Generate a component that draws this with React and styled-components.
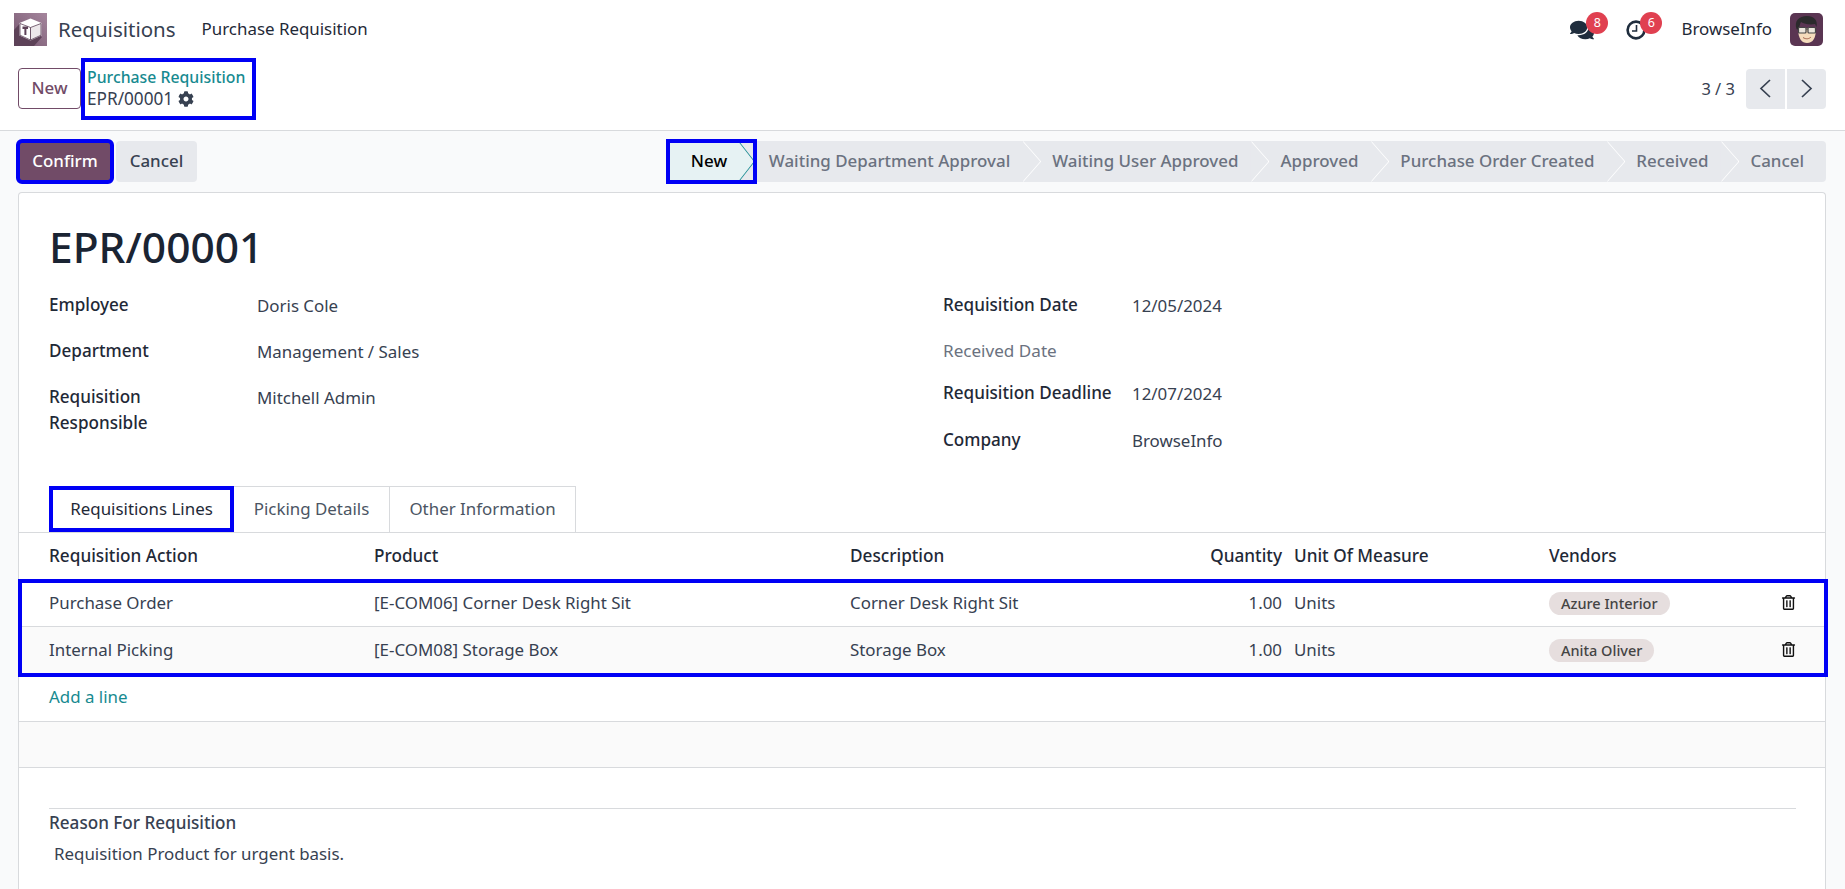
import React from 'react';
import styled, { createGlobalStyle } from 'styled-components';
import { FaComments, FaCog, FaRegTrashAlt } from 'react-icons/fa';

const GlobalStyle = createGlobalStyle`
  html, body, #root {
    height: 100%;
    margin: 0;
  }
  body {
    background: #f9fafb;
    color: #374151;
    font-family: "Noto Sans", "Open Sans", sans-serif;
    font-size: 16.9px;
    overflow: hidden;
  }
  * { box-sizing: border-box; }
`;

const MARK = '#0000f5';
const LINE = '#d8dadd';
const COLUMNS = '325px 476px 444px 255px 232px 1fr';

const Page = styled.div`
  height: 100vh;
  display: flex;
  flex-direction: column;
`;

const Top = styled.header`
  background: #fff;
  border-bottom: 1px solid ${LINE};
  height: 131px;
`;

const Navbar = styled.nav`
  height: 59px;
  display: flex;
  align-items: center;
  padding: 0 22px 0 14px;
`;

const Brand = styled.span`
  margin-left: 11px;
  padding-bottom: 2px;
  font-size: 20.5px;
  color: #374151;
`;

const MenuLink = styled.span`
  margin-left: 26px;
  padding-bottom: 2px;
  color: #1f2937;
`;

const NavRight = styled.div`
  margin-left: auto;
  display: flex;
  align-items: center;
`;

const NavIcon = styled.div`
  position: relative;
  width: ${(p) => p.$w}px;
  height: 20px;
  margin-right: ${(p) => p.$gap}px;
  display: flex;
  align-items: center;
  color: #1f2d3d;
`;

const Badge = styled.span`
  position: absolute;
  top: -8px;
  right: ${(p) => p.$right}px;
  width: 22px;
  height: 22px;
  border-radius: 50%;
  background: #e04050;
  color: #fff;
  font-size: 12.5px;
  display: flex;
  align-items: center;
  justify-content: center;
`;

const UserName = styled.span`
  padding-bottom: 2px;
  color: #1f2937;
  margin-right: 18px;
`;

const ControlRow = styled.div`
  height: 59px;
  display: flex;
  align-items: center;
  padding: 0 19px 0 18px;
`;

const NewButton = styled.button`
  width: 63px;
  height: 41px;
  padding: 0 0 2px;
  background: #fff;
  border: 1px solid #714b67;
  border-radius: 4px;
  color: #714b67;
  font: 500 16.9px "Noto Sans", sans-serif;
`;

const Breadcrumb = styled.div`
  width: 175px;
  height: 62px;
  padding: 0 0 1px 6px;
  display: flex;
  flex-direction: column;
  justify-content: center;
  outline: 4px solid ${MARK};
  outline-offset: -4px;
  line-height: 21px;
`;

const ParentLink = styled.span`
  color: #178a90;
  font-weight: 500;
  font-size: 15.8px;
  white-space: nowrap;
`;

const RecordName = styled.span`
  display: flex;
  align-items: center;
  gap: 5px;
  font-size: 17.2px;
`;

const Pager = styled.div`
  margin-left: auto;
  display: flex;
  align-items: center;
`;

const PagerText = styled.span`
  margin-right: 11px;
  font-size: 16.5px;
`;

const PagerButton = styled.button`
  width: 39px;
  height: 40px;
  margin-left: ${(p) => (p.$next ? 2 : 0)}px;
  padding: 0;
  border: 0;
  background: #e7e9ed;
  color: #374151;
  border-radius: ${(p) => (p.$next ? '0 4px 4px 0' : '4px 0 0 4px')};
  display: flex;
  align-items: center;
  justify-content: center;
`;

const ActionBar = styled.div`
  height: 61px;
  flex: none;
  display: flex;
  align-items: flex-start;
  padding: 10px 19px 0 18px;
`;

const ActionButton = styled.button`
  height: 41px;
  width: ${(p) => p.$w}px;
  margin-right: 4px;
  padding: 0 0 3px;
  border: 0;
  border-radius: 4px;
  font: 500 16.9px "Noto Sans", sans-serif;
  background: ${(p) => (p.$primary ? '#714b67' : '#e7e9ed')};
  color: ${(p) => (p.$primary ? '#fff' : '#374151')};
  ${(p) => p.$primary && `outline: 4px solid ${MARK}; outline-offset: -2px;`}
`;

const StatusBar = styled.div`
  margin-left: auto;
  display: flex;
  height: 41px;
`;

const Step = styled.div`
  position: relative;
  z-index: ${(p) => 20 - p.$i};
  height: 41px;
  padding: 0 ${(p) => (p.$last ? 22 : 12)}px 3px 30px;
  display: flex;
  align-items: center;
  background: #e7e9ed;
  color: #6b7280;
  font-weight: 500;
  font-size: 16.92px;
  white-space: nowrap;
  border-radius: ${(p) => (p.$last ? '0 4px 4px 0' : '0')};

  ${(p) => !p.$last && `
    &::before, &::after {
      content: '';
      position: absolute;
      top: 0;
      height: 41px;
      width: 18px;
      clip-path: polygon(0 0, 100% 50%, 0 100%);
    }
    &::before { right: -19px; background: #fff; }
    &::after { right: -18px; background: #e7e9ed; }
  `}
`;

const ActiveStep = styled.div`
  position: relative;
  z-index: 30;
  isolation: isolate;
  width: 87px;
  height: 41px;
  margin-right: -16px;
  padding: 0 0 3px 23px;
  display: flex;
  align-items: center;
  color: #000;
  font-weight: 500;
  font-size: 17px;
  outline: 4px solid ${MARK};
  outline-offset: -2px;

  &::before, &::after {
    content: '';
    position: absolute;
    z-index: -1;
    top: 0;
    left: 0;
    height: 41px;
    width: 87px;
    clip-path: polygon(0 0, 71px 0, 87px 50%, 71px 100%, 0 100%);
  }
  &::before { background: #178a90; }
  &::after { left: -1px; background: #e6f2f3; }
`;

const Sheet = styled.main`
  flex: 1;
  margin: 0 19px 0 18px;
  background: #fff;
  border: 1px solid ${LINE};
  border-bottom: 0;
  border-radius: 4px 4px 0 0;
`;

const Title = styled.h1`
  margin: 26px 0 7px;
  padding-left: 30px;
  font-size: 42.5px;
  line-height: 56px;
  font-weight: 500;
  color: #1a2433;
`;

const Groups = styled.div`
  display: grid;
  grid-template-columns: 894px 1fr;
  padding-left: 30px;
  margin-bottom: 20px;
  height: 184px;
`;

const Group = styled.div`
  display: flex;
  flex-direction: column;
`;

const Field = styled.div`
  display: grid;
  grid-template-columns: ${(p) => p.$label}px 1fr;
  min-height: ${(p) => p.$h || 46}px;
  padding-top: ${(p) => (p.$top === undefined ? 10 : p.$top)}px;
  line-height: 26px;
`;

const Label = styled.div`
  font-size: 17.1px;
  color: ${(p) => (p.$muted ? '#6b7280' : '#1f2937')};
  font-weight: ${(p) => (p.$muted ? 400 : 500)};
`;

const Value = styled.div`
  padding-top: 1px;
`;

const TabBar = styled.div`
  display: flex;
  height: 47px;
  padding-left: 30px;
  border-bottom: 1px solid ${LINE};
`;

const Tab = styled.div`
  width: ${(p) => p.$w}px;
  height: 46px;
  padding-bottom: 2px;
  display: flex;
  align-items: center;
  justify-content: center;
  color: ${(p) => (p.$active ? '#1f2937' : '#4b5563')};
  border: 1px solid ${LINE};
  border-left-width: ${(p) => (p.$first ? 1 : 0)}px;
  border-bottom: 0;
  ${(p) => p.$active && `outline: 4px solid ${MARK}; outline-offset: -4px;`}
`;

const TableRow = styled.div`
  display: grid;
  grid-template-columns: ${COLUMNS};
  align-items: center;
  padding: 0 0 ${(p) => p.$under || 0}px 30px;
  height: ${(p) => p.$h}px;
  background: ${(p) => (p.$alt ? '#fafafa' : '#fff')};
  border-bottom: ${(p) => (p.$line ? `1px solid ${LINE}` : '0')};
`;

const HeadCell = styled.div`
  font-weight: 500;
  font-size: 17.2px;
  color: #1f2937;
`;

const SplitCell = styled.div`
  display: flex;
  justify-content: space-between;
  padding-right: 12px;
`;

const Rows = styled.div`
  position: relative;
  margin-right: -2px;
  outline: 4px solid ${MARK};
  outline-offset: -3px;
`;

const Chip = styled.span`
  display: inline-block;
  height: 23px;
  padding: 0 12px;
  border-radius: 12px;
  background: #e6dede;
  color: #444;
  font-size: 14.5px;
  font-weight: 500;
  line-height: 22px;
`;

const Trash = styled.div`
  display: flex;
  color: #111;
`;

const AddLine = styled.div`
  height: 45px;
  padding: 8px 0 0 30px;
  line-height: 26px;
  color: #178a90;
`;

const Footer = styled.div`
  height: 47px;
  background: #fafafa;
  border-top: 1px solid ${LINE};
  border-bottom: 1px solid ${LINE};
`;

const Notes = styled.section`
  margin: 40px 29px 0 30px;
  border-top: 1px solid ${LINE};
`;

const NotesTitle = styled.div`
  margin-top: 1px;
  line-height: 26px;
  font-weight: 500;
  font-size: 17.1px;
`;

const NotesText = styled.div`
  margin-top: 5px;
  padding-left: 5px;
  line-height: 26px;
`;

const Logo = () => (
  <svg width="33" height="33" viewBox="0 0 33 33">
    <defs>
      <linearGradient id="logoBg" x1="0" y1="1" x2="1" y2="0">
        <stop offset="0" stopColor="#75566f" />
        <stop offset="1" stopColor="#a5869d" />
      </linearGradient>
    </defs>
    <rect width="33" height="33" fill="url(#logoBg)" />
    <path d="M5.5 11 L0 17 V33 H20 L28 24 Z" fill="#5d4258" />
    <path d="M16.5 5.5 L27.5 10 V22.5 L16.5 27.5 L5.5 22.5 V10 Z" fill="#fff" />
    <path d="M6 10.5 L16.5 14.5 V27 L6 22.2 Z" fill="#fff" stroke="#5d4258" strokeWidth="0.8" />
    <path d="M27 10.5 L16.5 14.5 V27 L27 22.2 Z" fill="#ece7ea" stroke="#5d4258" strokeWidth="0.8" />
    <path d="M8.5 13.5 H14 V16 H12.4 V22 H10.4 V16 H8.5 Z" fill="#5d4258" />
  </svg>
);

const Avatar = () => (
  <svg width="33" height="33" viewBox="0 0 33 33">
    <rect width="33" height="33" rx="5" fill="#5a3552" />
    <path d="M8 15 C8 26 12 30 17 30 C23 30 26 25 26 15 Z" fill="#f5dcbc" />
    <path d="M6.5 16 C4 8 9 3 17 3 C24 3 28 7 26.5 14 L25 11 C20 12 14 11 11 9 C10 11 9 14 8.5 17 Z" fill="#2b2a2c" />
    <rect x="8.5" y="14.5" width="7.5" height="5.5" rx="1" fill="#ece6dc" stroke="#444" strokeWidth="1.2" />
    <rect x="18" y="14.5" width="7.5" height="5.5" rx="1" fill="#ece6dc" stroke="#444" strokeWidth="1.2" />
    <path d="M16 16 H18" stroke="#444" strokeWidth="1.2" />
    <path d="M13 24.5 C16 26.5 19 26 21 24" stroke="#a5654f" strokeWidth="1" fill="none" />
  </svg>
);

const ClockIcon = () => (
  <svg width="20" height="20" viewBox="0 0 20 20" fill="none" stroke="currentColor">
    <circle cx="10" cy="10" r="8.4" strokeWidth="2.6" />
    <path d="M10.5 5 V11 H6" strokeWidth="1.6" />
  </svg>
);

const Chevron = ({ flip }) => (
  <svg width="13" height="19" viewBox="0 0 13 19" fill="none" stroke="currentColor" strokeWidth="1.7">
    <path d={flip ? 'M2 1 L11 9.5 L2 18' : 'M11 1 L2 9.5 L11 18'} />
  </svg>
);

const steps = [
  'Waiting Department Approval',
  'Waiting User Approved',
  'Approved',
  'Purchase Order Created',
  'Received',
  'Cancel',
];

const lines = [
  { action: 'Purchase Order', product: '[E-COM06] Corner Desk Right Sit', desc: 'Corner Desk Right Sit', vendor: 'Azure Interior', h: 47, under: 1 },
  { action: 'Internal Picking', product: '[E-COM08] Storage Box', desc: 'Storage Box', vendor: 'Anita Oliver', h: 49, under: 4, alt: true },
];

export default function App() {
  return (
    <Page>
      <GlobalStyle />
      <Top>
        <Navbar>
          <Logo />
          <Brand>Requisitions</Brand>
          <MenuLink>Purchase Requisition</MenuLink>
          <NavRight>
            <NavIcon $w={24} $gap={32}>
              <FaComments size={24} />
              <Badge $right={-14}>8</Badge>
            </NavIcon>
            <NavIcon $w={20} $gap={35}>
              <ClockIcon />
              <Badge $right={-16}>6</Badge>
            </NavIcon>
            <UserName>BrowseInfo</UserName>
            <Avatar />
          </NavRight>
        </Navbar>
        <ControlRow>
          <NewButton>New</NewButton>
          <Breadcrumb>
            <ParentLink>Purchase Requisition</ParentLink>
            <RecordName>EPR/00001 <FaCog size={16} /></RecordName>
          </Breadcrumb>
          <Pager>
            <PagerText>3 / 3</PagerText>
            <PagerButton><Chevron /></PagerButton>
            <PagerButton $next><Chevron flip /></PagerButton>
          </Pager>
        </ControlRow>
      </Top>
      <ActionBar>
        <ActionButton $primary $w={94}>Confirm</ActionButton>
        <ActionButton $w={81}>Cancel</ActionButton>
        <StatusBar>
          <ActiveStep>New</ActiveStep>
          {steps.map((s, i) => (
            <Step key={s} $i={i} $last={i === steps.length - 1}>{s}</Step>
          ))}
        </StatusBar>
      </ActionBar>
      <Sheet>
        <Title>EPR/00001</Title>
        <Groups>
          <Group>
            <Field $label={208}><Label>Employee</Label><Value>Doris Cole</Value></Field>
            <Field $label={208}><Label>Department</Label><Value>Management / Sales</Value></Field>
            <Field $label={208}><Label>Requisition<br />Responsible</Label><Value>Mitchell Admin</Value></Field>
          </Group>
          <Group>
            <Field $label={189}><Label>Requisition Date</Label><Value>12/05/2024</Value></Field>
            <Field $label={189}><Label $muted>Received Date</Label><Value /></Field>
            <Field $label={189} $h={40} $top={6}><Label>Requisition Deadline</Label><Value>12/07/2024</Value></Field>
            <Field $label={189} $h={52} $top={13}><Label>Company</Label><Value>BrowseInfo</Value></Field>
          </Group>
        </Groups>
        <TabBar>
          <Tab $w={185} $first $active>Requisitions Lines</Tab>
          <Tab $w={156}>Picking Details</Tab>
          <Tab $w={186}>Other Information</Tab>
        </TabBar>
        <TableRow $h={47} $under={2}>
          <HeadCell>Requisition Action</HeadCell>
          <HeadCell>Product</HeadCell>
          <SplitCell>
            <HeadCell>Description</HeadCell><HeadCell>Quantity</HeadCell>
          </SplitCell>
          <HeadCell>Unit Of Measure</HeadCell>
          <HeadCell>Vendors</HeadCell>
        </TableRow>
        <Rows>
          {lines.map((l, i) => (
            <TableRow key={l.action} $h={l.h} $under={l.under} $alt={l.alt} $line={i === 0}>
              <div>{l.action}</div>
              <div>{l.product}</div>
              <SplitCell>
                <span>{l.desc}</span><span>1.00</span>
              </SplitCell>
              <div>Units</div>
              <div><Chip>{l.vendor}</Chip></div>
              <Trash><FaRegTrashAlt size={15} /></Trash>
            </TableRow>
          ))}
        </Rows>
        <AddLine>Add a line</AddLine>
        <Footer />
        <Notes>
          <NotesTitle>Reason For Requisition</NotesTitle>
          <NotesText>Requisition Product for urgent basis.</NotesText>
        </Notes>
      </Sheet>
    </Page>
  );
}
